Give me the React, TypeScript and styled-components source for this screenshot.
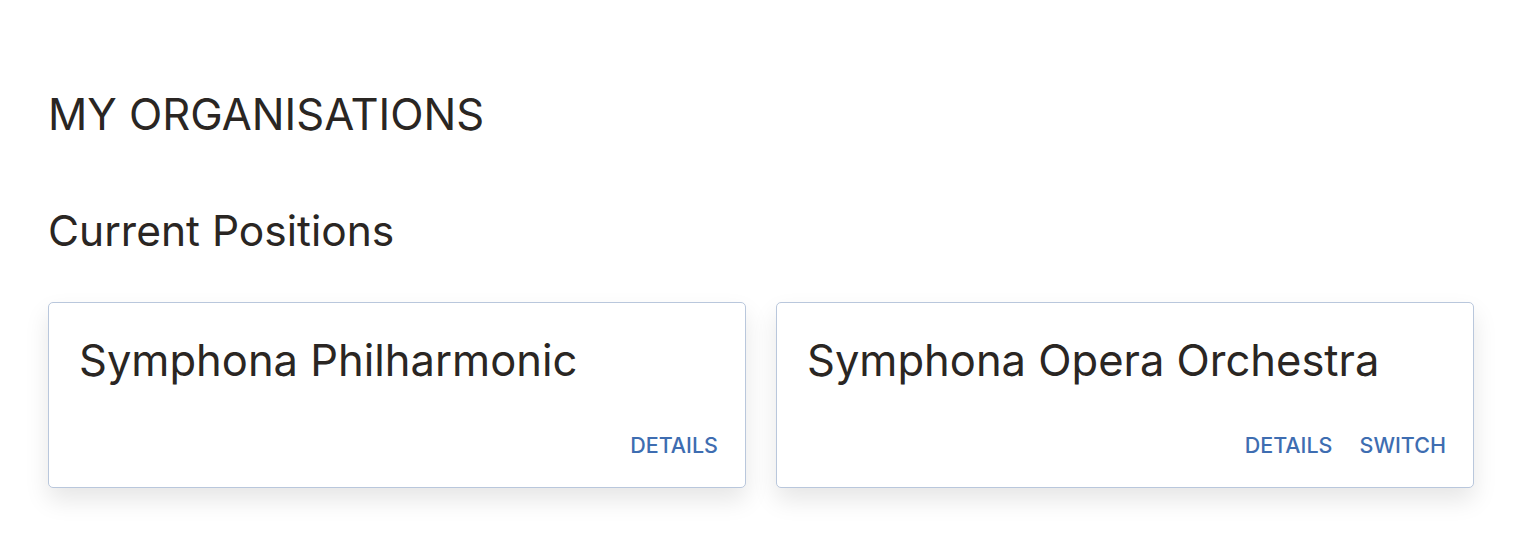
import React from "react";
import styled, { createGlobalStyle } from "styled-components";

const Global = createGlobalStyle`
  html, body { margin: 0; padding: 0; background: #ffffff; }
  body { font-family: "Inter", "Open Sans", sans-serif; color: #2a2623; }
`;

const Page = styled.main`
  padding: 86px 40px 40px 48px;
  display: flex;
  flex-direction: column;
`;

const Title = styled.h1`
  margin: 0;
  font-size: 43.5px;
  font-weight: 400;
  line-height: 56px;
  letter-spacing: 0;
`;

const Subtitle = styled.h2`
  margin: 61px 0 0;
  font-size: 42.5px;
  font-weight: 400;
  line-height: 56px;
`;

const Grid = styled.div`
  margin-top: 43px;
  display: grid;
  grid-template-columns: 1fr 1fr;
  gap: 30px;
`;

const Card = styled.section`
  height: 186px;
  box-sizing: border-box;
  border: 1px solid #b9c7dc;
  border-radius: 5px;
  background: #fff;
  box-shadow: 0 12px 24px rgba(0, 0, 0, 0.1);
  display: flex;
  flex-direction: column;
  justify-content: space-between;
  padding: 29px 27px 27px 30px;
`;

const CardTitle = styled.h3`
  margin: 0;
  font-size: 43.5px;
  font-weight: 400;
  line-height: 56px;
`;

const Actions = styled.div`
  display: flex;
  justify-content: flex-end;
  gap: 27px;
`;

const Action = styled.button`
  border: none;
  background: none;
  padding: 0;
  font-family: inherit;
  font-size: 21.5px;
  font-weight: 500;
  color: #3e6db1;
  text-transform: uppercase;
  cursor: pointer;
  line-height: 30px;
`;

const orgs = [
  { name: "Symphona Philharmonic", actions: ["Details"] },
  { name: "Symphona Opera Orchestra", actions: ["Details", "Switch"] },
];

export default function App() {
  return (
    <>
      <Global />
      <Page>
        <Title>MY ORGANISATIONS</Title>
        <Subtitle>Current Positions</Subtitle>
        <Grid>
          {orgs.map((o) => (
            <Card key={o.name}>
              <CardTitle>{o.name}</CardTitle>
              <Actions>
                {o.actions.map((a) => (
                  <Action key={a}>{a}</Action>
                ))}
              </Actions>
            </Card>
          ))}
        </Grid>
      </Page>
    </>
  );
}
